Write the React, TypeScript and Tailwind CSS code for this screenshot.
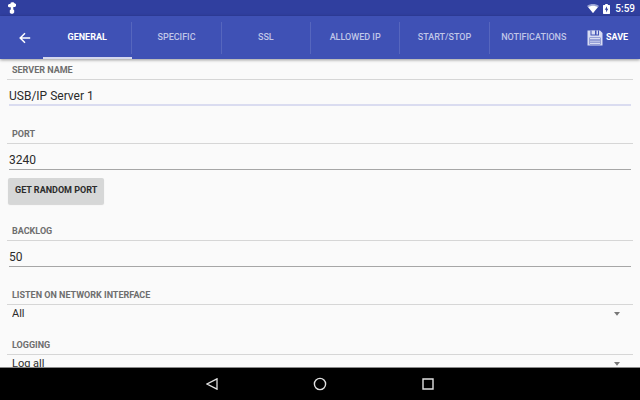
import React, { useState } from 'react';

const TABS = ['GENERAL', 'SPECIFIC', 'SSL', 'ALLOWED IP', 'START/STOP', 'NOTIFICATIONS'];

const StatusBar: React.FC = () => (
  <div className="flex h-4 shrink-0 items-center justify-between bg-[#303f9f] pl-2 pr-[5px] text-white">
    <svg className="h-3 w-2" viewBox="0 0 8 12" fill="currentColor" aria-hidden="true">
      <path d="M2.600.7 4 .2h1.500l1.300 1.300 1.200.5v2L7 5H5.300v2.500l.9.7v2.300L5 11.800H3l-1.200-1.100V8.200l1-.8V5.300H1L0 4.500V3l1-.9h1.400z" />
    </svg>
    <div className="flex items-center">
      <svg className="mt-px h-[9px] w-3" viewBox="0 0 12 9" aria-hidden="true">
        <path d="M0 2C3.500-.6 8.500-.6 12 2L6 9z" fill="#98a1d3" />
        <path d="M1.300 3.200C4 1.200 8 1.200 10.700 3.200L6 9z" fill="white" />
      </svg>
      <svg className="ml-1 mr-[5px] mt-px h-[10px] w-[7px]" viewBox="0 0 7 10" aria-hidden="true">
        <path d="M2.200 0h2.600v1h1.700l.5.5v8l-.5.5h-6L0 9.500v-8L.5 1h1.700z" fill="white" />
        <path d="M4 2.300 1.800 5.800h1.300v2.700l2.200-3.800H4z" fill="#303f9f" />
      </svg>
      <span className="pt-px text-[10px] font-medium leading-4">5:59</span>
    </div>
  </div>
);

const SaveIcon: React.FC = () => (
  <svg className="h-4 w-4" viewBox="0 0 16 16" aria-hidden="true">
    <path d="M.5.5H13L15.500 3v12.500H.5z" fill="#d8dcf3" />
    <path d="M3.500.5h8.500v5H3.500z" fill="#4353b5" />
    <path d="M4.500.5h3.500v4H4.500zM9.500.5h1.500v4H9.500z" fill="#d8dcf3" />
    <path d="M2.500 7.500h11v7h-11z" fill="#5262bb" />
    <path d="M3 8h10v1.500H3zM3 10.400h10v1.300H3zM3 12.600h10v1.400H3z" fill="#d8dcf3" />
  </svg>
);

interface FieldLabelProps {
  htmlFor: string;
  children: React.ReactNode;
}

const FieldLabel: React.FC<FieldLabelProps> = ({ htmlFor, children }) => (
  <label
    htmlFor={htmlFor}
    className="block h-5 border-b border-[#d6d6d6] pl-[5px] text-[9px] font-bold leading-5 text-[#6e6e6e]"
  >
    {children}
  </label>
);

interface TextFieldProps {
  id: string;
  label: string;
  value: string;
  active?: boolean;
}

const TextField: React.FC<TextFieldProps> = ({ id, label, value, active }) => (
  <div>
    <FieldLabel htmlFor={id}>{label}</FieldLabel>
    <div className="px-[2px]">
      <input
        id={id}
        type="text"
        defaultValue={value}
        className={`block h-[26px] w-full bg-transparent text-[12px] text-[#2b2b2b] outline-none ${
          active ? 'border-b-2 border-[#dadcf0] pt-[7px]' : 'border-b border-[#a6a6a6] pt-[6px]'
        }`}
      />
    </div>
  </div>
);

interface SelectFieldProps {
  id: string;
  label: string;
  options: string[];
}

const SelectField: React.FC<SelectFieldProps> = ({ id, label, options }) => (
  <div>
    <FieldLabel htmlFor={id}>{label}</FieldLabel>
    <div className="flex h-[18px] items-center pr-3">
      <select
        id={id}
        className="h-full min-w-0 flex-1 appearance-none bg-transparent pl-[5px] text-[11px] text-[#2b2b2b] outline-none"
      >
        {options.map((option) => (
          <option key={option}>{option}</option>
        ))}
      </select>
      <svg className="pointer-events-none h-1 w-2" viewBox="0 0 8 4" aria-hidden="true">
        <path d="M1 0h6L4 3.800z" fill="#777777" />
      </svg>
    </div>
  </div>
);

export default function App() {
  const [tab, setTab] = useState('GENERAL');

  return (
    <div className="flex h-screen flex-col overflow-hidden bg-[#fafafa] font-['Roboto',sans-serif]">
      <StatusBar />

      <header className="z-10 flex h-[43px] shrink-0 bg-[#3f51b5] text-[9px] font-medium text-white shadow-[0_1px_3px_rgba(0,0,0,0.4)]">
        <button type="button" aria-label="Back" className="flex w-[43px] items-center justify-center pl-[6px]">
          <svg className="h-3 w-3" viewBox="0 0 12 12" fill="none" stroke="currentColor" strokeWidth="1.500" aria-hidden="true">
            <path d="M11.200 6H1.500M6 1.200 1.200 6 6 10.800" />
          </svg>
        </button>
        <div role="tablist" className="grid flex-1 grid-cols-6">
          {TABS.map((name, i) => (
            <button
              key={name}
              type="button"
              role="tab"
              aria-selected={tab === name}
              onClick={() => setTab(name)}
              className={`flex items-center border-b-2 pt-[2px] ${
                tab === name ? 'border-[#d5d8ee] font-bold text-white' : 'border-transparent text-[#c0c6e8]'
              }`}
            >
              <span
                className={`flex h-8 flex-1 items-center justify-center border-r ${
                  i < TABS.length - 1 ? 'border-[#5666be]' : 'border-transparent'
                }`}
              >
                {name}
              </span>
            </button>
          ))}
        </div>
        <button type="button" className="flex w-[61px] items-center gap-[3px] pl-2 font-bold">
          <SaveIcon />
          SAVE
        </button>
      </header>

      <main className="min-h-0 flex-1 overflow-hidden px-[7px] pt-px">
        <form className="flex flex-col gap-[18px]" onSubmit={(e) => e.preventDefault()}>
          <TextField id="server-name" label="SERVER NAME" value="USB/IP Server 1" active />
          <div>
            <TextField id="port" label="PORT" value="3240" />
            <button
              type="button"
              className="ml-px mt-2 block h-[26px] rounded-[2px] bg-[#d6d7d7] px-[7px] text-[9px] font-bold text-[#2b2b2b] shadow-[0_1px_1px_rgba(0,0,0,0.15)]"
            >
              GET RANDOM PORT
            </button>
          </div>
          <div className="-mt-px">
            <TextField id="backlog" label="BACKLOG" value="50" />
          </div>
          <div className="flex flex-col gap-3">
            <SelectField id="interface" label="LISTEN ON NETWORK INTERFACE" options={['All']} />
            <SelectField id="logging" label="LOGGING" options={['Log all']} />
          </div>
        </form>
      </main>

      <nav className="flex h-[33px] shrink-0 justify-center border-t border-[#8a8a8a] bg-black text-[#e0e0e0]">
        <button type="button" aria-label="Back" className="flex w-[108px] items-center justify-center">
          <svg className="h-3 w-3" viewBox="0 0 12 12" fill="none" stroke="currentColor" strokeWidth="1.300" aria-hidden="true">
            <path d="M11 .8v10.400L1 6z" />
          </svg>
        </button>
        <button type="button" aria-label="Home" className="flex w-[108px] items-center justify-center">
          <svg className="h-[14px] w-[14px]" viewBox="0 0 14 14" fill="none" stroke="currentColor" strokeWidth="1.400" aria-hidden="true">
            <circle cx="7" cy="7" r="5.600" />
          </svg>
        </button>
        <button type="button" aria-label="Recent apps" className="flex w-[108px] items-center justify-center">
          <svg className="h-3 w-3" viewBox="0 0 12 12" fill="none" stroke="currentColor" strokeWidth="1.400" aria-hidden="true">
            <path d="M1 1h10v10H1z" />
          </svg>
        </button>
      </nav>
    </div>
  );
}
